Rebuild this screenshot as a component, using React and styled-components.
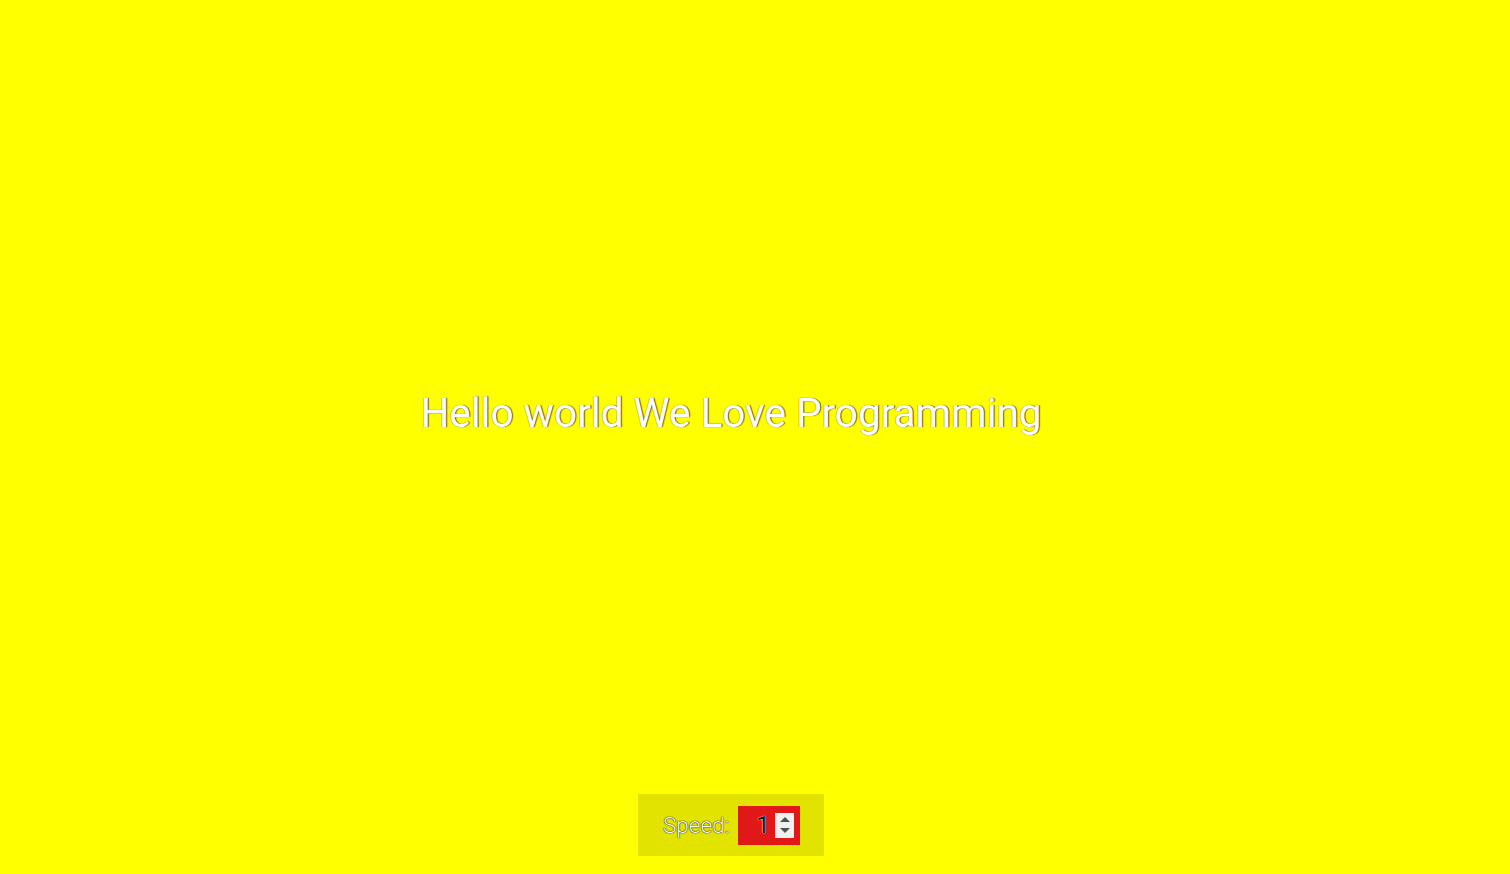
import React, { useState } from "react";
import styled, { createGlobalStyle } from "styled-components";

const GlobalStyle = createGlobalStyle`
    html, body {
        margin: 0;
        padding: 0;
        background: #ffff00;
        font-family: Roboto, "Liberation Sans", sans-serif;
    }
`;

const Page = styled.div`
    width: 1462px;
    height: 874px;
    display: flex;
    flex-direction: column;
    align-items: center;
    background: #ffff00;
`;

const Stage = styled.div`
    flex: 1;
    display: flex;
    align-items: center;
    justify-content: center;
    padding-top: 32px;
`;

const Title = styled.h1`
    margin: 0;
    font-family: Roboto, "Liberation Sans", sans-serif;
    font-weight: 400;
    font-size: 40.5px;
    line-height: 48px;
    color: #ffffff;
    text-shadow: 1px 0 1px rgba(0, 0, 0, 0.7), -1px 0 0 rgba(0, 0, 0, 0.25);
    white-space: nowrap;
`;

const Controls = styled.div`
    display: flex;
    align-items: center;
    gap: 9px;
    width: 186px;
    height: 62px;
    box-sizing: border-box;
    padding: 0 25px;
    margin-bottom: 18px;
    background: #e3e300;
`;

const Label = styled.label`
    font-family: Roboto, "Liberation Sans", sans-serif;
    font-weight: 300;
    font-size: 22.5px;
    color: #ffffff;
    text-shadow: 0 0 1px #000, 0 0 1px #000;
`;

const NumberBox = styled.div`
    display: flex;
    align-items: center;
    width: 62px;
    height: 39px;
    box-sizing: border-box;
    padding: 0 6px 0 18px;
    background: #e01818;
`;

const SpeedInput = styled.input`
    width: 19px;
    height: 28px;
    padding: 0;
    border: none;
    background: transparent;
    font-family: Roboto, "Liberation Sans", sans-serif;
    font-size: 24px;
    color: #111111;
    caret-color: #ffffff;
    text-shadow: 0 0 1px #fff, 0 0 1px #fff;
    outline: none;
    -moz-appearance: textfield;

    &::-webkit-inner-spin-button,
    &::-webkit-outer-spin-button {
        -webkit-appearance: none;
        margin: 0;
    }
`;

const Stepper = styled.div`
    display: flex;
    flex-direction: column;
    width: 19px;
    height: 21px;
    padding: 2px 0;
    background: #f0f0f0;
`;

const StepButton = styled.button`
    flex: 1;
    display: flex;
    align-items: center;
    justify-content: center;
    padding: 0;
    border: none;
    background: transparent;
    cursor: pointer;

    &::after {
        content: "";
        border-left: 5px solid transparent;
        border-right: 5px solid transparent;
        ${(p) =>
            p.$down
                ? "border-top: 5px solid #505050;"
                : "border-bottom: 5px solid #505050;"}
    }
`;

const App = () => {
    const [speed, setSpeed] = useState(1);

    return (
        <Page>
            <GlobalStyle />
            <Stage>
                <Title>Hello world We Love Programming</Title>
            </Stage>
            <Controls>
                <Label htmlFor="speed">Speed:</Label>
                <NumberBox>
                    <SpeedInput
                        id="speed"
                        type="number"
                        value={speed}
                        onChange={(e) => setSpeed(e.target.value)}
                        autoFocus
                    />
                    <Stepper>
                        <StepButton onClick={() => setSpeed(Number(speed) + 1)} />
                        <StepButton $down onClick={() => setSpeed(Number(speed) - 1)} />
                    </Stepper>
                </NumberBox>
            </Controls>
        </Page>
    );
};

export default App;
